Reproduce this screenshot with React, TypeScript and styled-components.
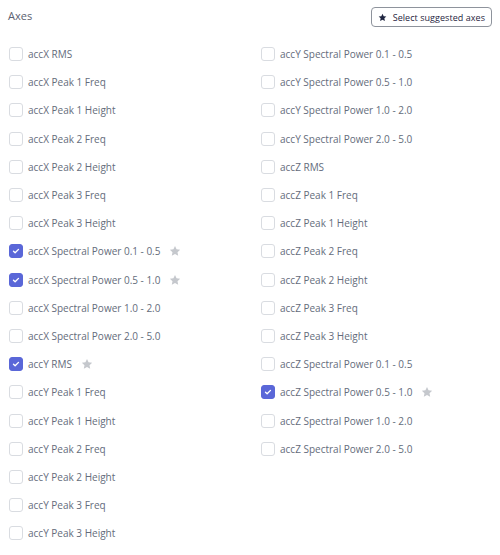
import React, { useState } from 'react'
import styled, { createGlobalStyle } from 'styled-components'

const GlobalStyle = createGlobalStyle`
  body {
    margin: 0;
    background: #ffffff;
    font-family: "Open Sans", "Noto Sans", sans-serif;
  }
`;

const leftAxes = [
  'accX RMS',
  'accX Peak 1 Freq',
  'accX Peak 1 Height',
  'accX Peak 2 Freq',
  'accX Peak 2 Height',
  'accX Peak 3 Freq',
  'accX Peak 3 Height',
  'accX Spectral Power 0.1 - 0.5',
  'accX Spectral Power 0.5 - 1.0',
  'accX Spectral Power 1.0 - 2.0',
  'accX Spectral Power 2.0 - 5.0',
  'accY RMS',
  'accY Peak 1 Freq',
  'accY Peak 1 Height',
  'accY Peak 2 Freq',
  'accY Peak 2 Height',
  'accY Peak 3 Freq',
  'accY Peak 3 Height',
];

const rightAxes = [
  'accY Spectral Power 0.1 - 0.5',
  'accY Spectral Power 0.5 - 1.0',
  'accY Spectral Power 1.0 - 2.0',
  'accY Spectral Power 2.0 - 5.0',
  'accZ RMS',
  'accZ Peak 1 Freq',
  'accZ Peak 1 Height',
  'accZ Peak 2 Freq',
  'accZ Peak 2 Height',
  'accZ Peak 3 Freq',
  'accZ Peak 3 Height',
  'accZ Spectral Power 0.1 - 0.5',
  'accZ Spectral Power 0.5 - 1.0',
  'accZ Spectral Power 1.0 - 2.0',
  'accZ Spectral Power 2.0 - 5.0',
];

// suggested axes get the little grey star
const suggested = [
  'accX Spectral Power 0.1 - 0.5',
  'accX Spectral Power 0.5 - 1.0',
  'accY RMS',
  'accZ Spectral Power 0.5 - 1.0',
];

const StarIcon = ({ size, color }: { size: number; color: string }) => (
  <svg width={size} height={size} viewBox="0 0 24 24" fill={color}>
    <path d="M12 1.8l3.1 6.6 7.2.9-5.3 5 1.4 7.1L12 17.9l-6.4 3.5L7 14.3l-5.3-5 7.2-.9z" />
  </svg>
);

const CheckIcon = () => (
  <svg width="10" height="10" viewBox="0 0 16 16" fill="none">
    <path d="M4 8.4l2.6 2.5L12 5.4" stroke="#ffffff" strokeWidth="2.2" strokeLinecap="round" strokeLinejoin="round" />
  </svg>
);

const App = () => {
  const [checked, setChecked] = useState<string[]>(suggested);

  const toggle = (name: string) => {
    setChecked(prev => prev.includes(name) ? prev.filter(n => n !== name) : [...prev, name]);
  };

  const renderColumn = (items: string[]) => (
    <Column>
      {items.map(name => {
        const on = checked.includes(name);
        return (
          <Row key={name} onClick={() => toggle(name)}>
            <Box checked={on}>{on && <CheckIcon />}</Box>
            <Label>{name}</Label>
            {suggested.includes(name) && on && (
              <StarMark><StarIcon size={12} color="#c5c8cd" /></StarMark>
            )}
          </Row>
        );
      })}
    </Column>
  );

  return (
    <>
      <GlobalStyle />
      <Panel>
        <Header>
          <Title>Axes</Title>
          <SuggestButton onClick={() => setChecked(suggested)}>
            <StarIcon size={9} color="#1f2540" />
            Select suggested axes
          </SuggestButton>
        </Header>
        <Columns>
          {renderColumn(leftAxes)}
          {renderColumn(rightAxes)}
        </Columns>
      </Panel>
    </>
  );
};

export default App

const Panel = styled.div`
  padding: 0 8px 0 9px;
`;

const Header = styled.div`
  display: flex;
  justify-content: space-between;
  align-items: center;
  height: 34px;
`;

const Title = styled.div`
  font-size: 11px;
  color: #5b6170;
  margin-left: -1px;
  margin-top: -3px;
`;

const SuggestButton = styled.button`
  display: flex;
  align-items: center;
  gap: 6px;
  height: 20px;
  padding: 0 6px;
  border: 1px solid #8e939c;
  border-radius: 4px;
  background: #ffffff;
  color: #1f2540;
  font-family: "Open Sans", "Noto Sans", sans-serif;
  font-size: 9px;
  letter-spacing: 0.05px;
  cursor: pointer;
`;

const Columns = styled.div`
  display: grid;
  grid-template-columns: 252px 1fr;
  margin-top: 6px;
`;

const Column = styled.div`
  display: flex;
  flex-direction: column;
`;

const Row = styled.div`
  display: flex;
  align-items: center;
  height: 28.2px;
  cursor: pointer;
`;

const Box = styled.span<{ checked: boolean }>`
  display: flex;
  align-items: center;
  justify-content: center;
  width: 14px;
  height: 14px;
  box-sizing: border-box;
  border-radius: 3px;
  border: 1px solid ${props => props.checked ? '#5a67d8' : '#d9dce1'};
  background: ${props => props.checked ? '#5a67d8' : '#ffffff'};
  flex-shrink: 0;
`;

const Label = styled.span`
  margin-left: 5px;
  font-size: 10px;
  color: #646c7b;
`;

const StarMark = styled.span`
  display: flex;
  margin-left: 9px;
`;
